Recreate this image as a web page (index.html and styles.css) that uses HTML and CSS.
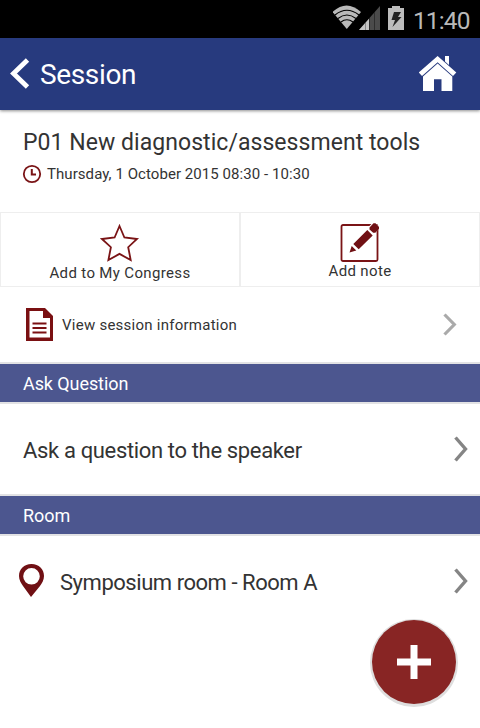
FILE: index.html
```html
<!DOCTYPE html>
<html lang="en">
<head>
<meta charset="utf-8">
<title>Session</title>
<link rel="stylesheet" href="styles.css">
</head>
<body>
<div class="screen">
  <div class="status">
    <svg class="status-icons" width="74" height="28" viewBox="0 0 74 28">
      <path fill="#b9b9b9" d="M-.5 8Q13.500-5 28 8L13.800 25Z"/>
      <path fill="none" stroke="#000" stroke-width="1.200" d="M2 11Q13.800 1.500 26 11M5 14.500Q13.800 7.500 23 14.500M8 18Q13.800 13.500 20 18"/>
      <path fill="#4b4b4b" d="M47 2V26H26Z"/>
      <path fill="#c4c4c4" d="M32 19.300V26H26ZM36 14.800V26H32.500V18.800Z"/>
      <path stroke="#222" stroke-width=".7" d="M36.500 14V26M41.500 8V26"/>
      <path fill="#bcbcbc" d="M55 4H59V2H67V4H71V26H55Z"/>
      <path fill="#222" d="M61 8H68L65 13H68.500L59.500 23L62 16H58.500Z"/>
    </svg>
    <span class="clock">11:40</span>
  </div>
  <header class="appbar">
    <svg width="20" height="32" viewBox="0 0 20 32"><path fill="none" stroke="#fff" stroke-width="4.800" d="M17.500 2L3.500 15.500L17.500 29"/></svg>
    <h1 class="appbar-title">Session</h1>
    <svg width="38" height="36" viewBox="0 0 38 36">
      <path fill="#fff" d="M26 0H30V9L26 5.500ZM18.600 0L37.300 16.500L34 20L18.600 6.300L3 20L-.3 16.500Z"/>
      <path fill="#fff" d="M18.600 7.500L33.300 20.500V35H22.500V23.300H15V35H4V20.500Z"/>
    </svg>
  </header>
  <section class="summary">
    <h2 class="summary-title">P01 New diagnostic/assessment tools</h2>
    <div class="summary-time">
      <svg width="20" height="20" viewBox="0 0 20 20" fill="none" stroke="#7a1416"><circle cx="10" cy="10" r="8.200" stroke-width="1.800"/><path stroke-width="2" d="M9.800 5V10.400H14"/></svg>
      <span class="time-text">Thursday, 1 October 2015 08:30 - 10:30</span>
    </div>
  </section>
  <div class="actions">
    <div class="action">
      <svg width="40" height="40" viewBox="0 0 40 40"><path fill="none" stroke="#7a1416" stroke-width="1.800" d="M19.500 4L24.400 15.500L37 17L28.200 25.200L30.700 38L19.500 31.900L8.400 38L10.900 25.200L2 17L14.600 15.500Z"/></svg>
      <span class="action-text add-congress">Add to My Congress</span>
    </div>
    <div class="action">
      <svg class="note-icon" width="40" height="40" viewBox="0 0 40 40">
        <rect x="1.500" y="3" width="36" height="36" rx="1.500" fill="none" stroke="#7a1416" stroke-width="1.800"/>
        <path fill="#fff" d="M8 31L11 22L33.500 0L40 5.500L18 28Z"/>
        <path fill="#701014" d="M9.500 30.500L11.700 23.900L16.300 28.500ZM13.300 22L27.300 8L32.700 13.400L18.700 27.300ZM29.500 5.400L33.500 1.300H35.500L39 5V6.700L35.300 10.800H33.200L29.500 7.400Z"/>
      </svg>
      <span class="action-text add-note">Add note</span>
    </div>
  </div>
  <div class="info-row">
    <svg width="27" height="33" viewBox="0 0 27 33">
      <path fill="#7a1012" d="M0 0H19L27 8V33H0Z"/><path fill="#fff" d="M3.500 3H17V10H24V29.500H3.500Z"/>
      <path stroke="#7a1012" stroke-width="2" d="M6.500 15.500H20.500M6.500 20H20.500M6.500 24.500H20.500"/>
    </svg>
    <span class="info-text">View session information</span>
    <svg class="chevron" width="14" height="24" viewBox="0 0 14 24"><path fill="none" stroke="#aaa" stroke-width="3.200" d="M1.500 1.500L11.300 11.500L1.500 21.500"/></svg>
  </div>
  <div class="bar"><span class="ask-heading">Ask Question</span></div>
  <div class="row">
    <span class="ask-text">Ask a question to the speaker</span>
    <svg class="chevron" width="14" height="26" viewBox="0 0 14 26"><path fill="none" stroke="#858585" stroke-width="3.400" d="M1.500 1.500L11.500 13L1.500 24.500"/></svg>
  </div>
  <div class="bar"><span class="room-heading">Room</span></div>
  <div class="row room-row">
    <svg class="pin" width="25" height="33" viewBox="0 0 25 33"><path fill="#701014" fill-rule="evenodd" d="M12.500 0C5 0 0 5 0 12C0 16 2 19 4 22L12 33L21 22C23 19 25 16 25 12C25 5 20 0 12.500 0ZM12.500 4A8.300 8.300 0 1 1 12.500 20.600A8.300 8.300 0 1 1 12.500 4Z"/></svg>
    <span class="room-text">Symposium room - Room A</span>
    <svg class="chevron" width="14" height="26" viewBox="0 0 14 26"><path fill="none" stroke="#858585" stroke-width="3.400" d="M1.500 1.500L11.500 13L1.500 24.500"/></svg>
  </div>
  <div class="fab"><svg width="34" height="34" viewBox="0 0 34 34"><path stroke="#fff" stroke-width="7" d="M17 0V34M0 17H34"/></svg></div>
</div>
</body>
</html>
```
FILE: styles.css
```css
* { box-sizing: border-box; }
body { margin: 0; background: #fff; color: #333; font-family: Roboto, sans-serif; }
h1, h2 { margin: 0; font-weight: 400; }
svg { display: block; flex: none; }
span, h1, h2 { white-space: nowrap; }
.screen { position: relative; width: 480px; height: 728px; overflow: hidden; }
.status { height: 38px; background: #000; display: flex; align-items: center; padding-left: 333px; }
.status-icons { margin-top: -2px; }
.clock { color: #b9b9b9; font-size: 24.5px; line-height: 30px; letter-spacing: -.9px; margin-left: 6px; margin-top: 3px; }
.appbar { height: 72px; background: #273a7e; color: #fff; display: flex; align-items: center; padding: 0 23px 0 10px; box-shadow: 0 1px 3px rgba(0,0,0,.45); }
.appbar-title { flex: 1; margin-left: 10px; font-size: 28px; line-height: 34px; letter-spacing: -.35px; margin-top: 1px; }
.summary { height: 102px; padding: 18px 23px 0; }
.summary-title { font-size: 23px; line-height: 30px; letter-spacing: .05px; }
.summary-time { display: flex; align-items: center; margin: 6px 0 0 -1px; }
.time-text { font-size: 15px; line-height: 20px; letter-spacing: .06px; margin-left: 5px; }
.actions { display: grid; grid-template-columns: 1fr 1fr; height: 75px; }
.action { border: 1px solid #eee; display: flex; flex-direction: column; align-items: center; padding-top: 9px; }
.action-text { font-size: 15px; line-height: 20px; letter-spacing: .35px; margin-top: 1px; }
.add-note { margin-top: -1px; }
.info-row { height: 75px; display: flex; align-items: center; padding: 0 23px 0 26px; }
.info-text { font-size: 15px; letter-spacing: .25px; margin-left: 9px; }
.chevron { margin-left: auto; }
.bar { height: 42px; background: #4c568f; border: solid #e2e2e4; border-width: 2px 0; color: #fff; font-size: 18px; line-height: 39px; letter-spacing: -.08px; padding-left: 23px; }
.row { height: 90px; display: flex; align-items: center; padding: 0 12px 0 23px; font-size: 22px; }
.ask-text { margin-top: 3px; letter-spacing: -.35px; }
.room-row { padding-left: 19px; }
.pin { margin-top: -2px; }
.room-text { margin: 3px 0 0 16px; letter-spacing: -.46px; }
.fab { position: absolute; left: 372px; top: 620px; width: 84px; height: 84px; border-radius: 50%; background: #882524; display: grid; place-items: center; box-shadow: 0 1px 0 2px #dedede; }
```
